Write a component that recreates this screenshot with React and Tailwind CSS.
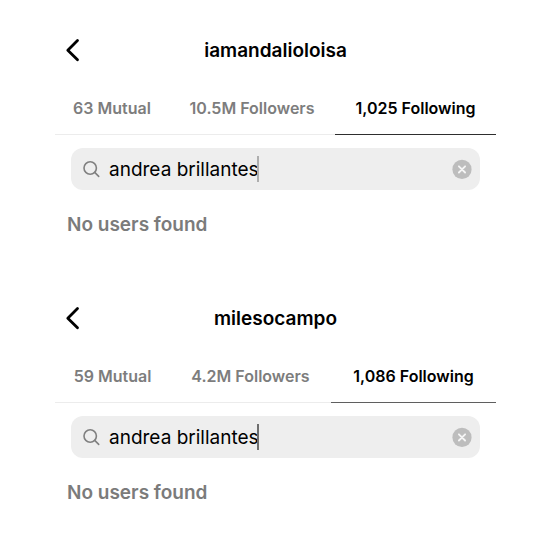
import React from 'react';

const profiles = [
  {
    username: 'iamandalioloisa',
    mutual: '63 Mutual',
    followers: '10.5M Followers',
    following: '1,025 Following',
    columns: 'grid-cols-[114fr_166fr_161fr]',
    underline: 'border-[#2e2e2e]',
    caret: 'bg-[#aeaeae]',
  },
  {
    username: 'milesocampo',
    mutual: '59 Mutual',
    followers: '4.2M Followers',
    following: '1,086 Following',
    columns: 'grid-cols-[115fr_161fr_165fr]',
    underline: 'border-[#5f5f5f]',
    caret: 'bg-[#6e6e6e]',
  },
];

export default function App() {
  return (
    <main className="min-h-screen bg-white pt-7 pl-[55px] pr-[54px] font-['Inter','Liberation_Sans',sans-serif] text-black">
      {profiles.map((profile) => (
        <FollowList key={profile.username} {...profile} />
      ))}
    </main>
  );
}

function FollowList({ username, mutual, followers, following, columns, underline, caret }) {
  return (
    <section className="pb-[57px]">
      <header className="grid h-[46px] grid-cols-[32px_1fr_32px] items-center">
        <button type="button" aria-label="Back" className="flex h-11 items-center pl-2">
          <BackIcon />
        </button>
        <h1 className="text-center text-[19px] leading-7 font-semibold">{username}</h1>
      </header>

      <nav className={`grid h-[61px] border-b border-[#ececec] ${columns}`}>
        <Tab label={mutual} />
        <Tab label={followers} />
        <Tab label={following} underline={underline} />
      </nav>

      <div className="px-4 pt-[13px]">
        <div className="flex h-[42px] items-center rounded-xl bg-[#eeeeee] pr-2 pl-3">
          <SearchIcon />
          <div className="relative ml-2 flex-1">
            <input
              type="text"
              aria-label="Search"
              defaultValue="andrea brillantes"
              className="block h-7 w-full bg-transparent pt-0.5 text-[19px] outline-none"
            />
            <span className={`absolute top-px left-[148px] h-[26px] w-0.5 ${caret}`} />
          </div>
          <button type="button" aria-label="Clear search">
            <ClearIcon />
          </button>
        </div>
      </div>

      <p className="px-3 pt-[21px] text-[19px] leading-7 font-semibold text-[#7b7b7b]">No users found</p>
    </section>
  );
}

function Tab({ label, underline }) {
  return (
    <button
      type="button"
      className={`-mb-px border-b pt-4 pb-2 text-base whitespace-nowrap font-semibold ${
        underline ? `${underline} text-black` : 'border-transparent text-[#7d7d7d]'
      }`}
    >
      {label}
    </button>
  );
}

function BackIcon() {
  return (
    <svg viewBox="0 0 20 26" className="h-[26px] w-5" fill="none" stroke="currentColor" strokeWidth="2.8" strokeLinecap="round" strokeLinejoin="round">
      <path d="M14.5 2.6 4.8 12.2 14.5 21.8" />
    </svg>
  );
}

function SearchIcon() {
  return (
    <svg viewBox="0 0 18 18" className="h-[18px] w-[18px] shrink-0 text-[#808080]" fill="none" stroke="currentColor" strokeWidth="1.6" strokeLinecap="round">
      <circle cx="7.2" cy="8" r="6.2" />
      <path d="m11.7 12.4 4 4" />
    </svg>
  );
}

function ClearIcon() {
  return (
    <svg viewBox="0 0 20 20" className="block h-5 w-5" fill="none">
      <circle cx="10" cy="10.4" r="9.6" fill="#bdbdbd" />
      <path d="m6.9 7.3 6.2 6.2m0-6.2-6.2 6.2" stroke="#f5f5f5" strokeWidth="1.8" strokeLinecap="round" />
    </svg>
  );
}
